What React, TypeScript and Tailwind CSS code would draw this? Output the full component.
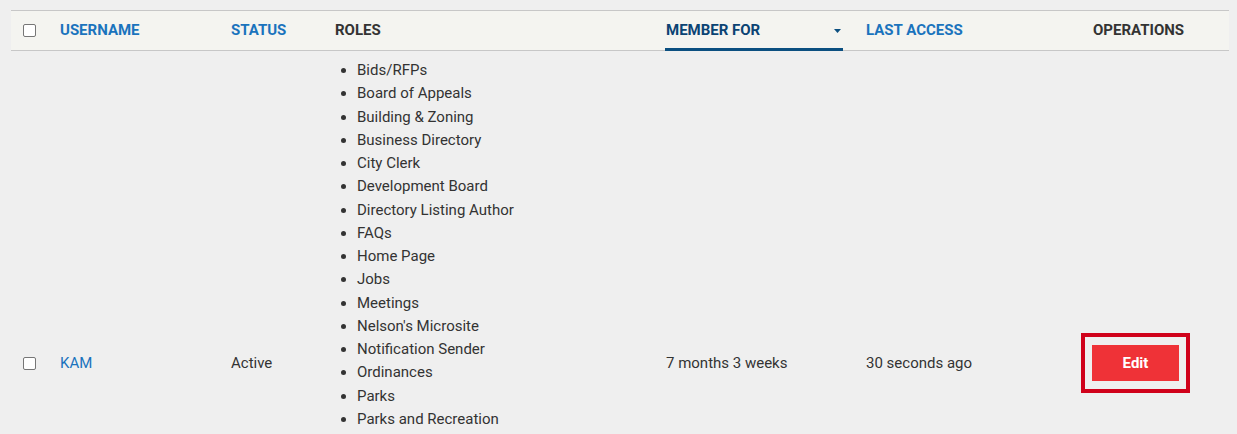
import React from "react";

const roles = [
  "Bids/RFPs",
  "Board of Appeals",
  "Building & Zoning",
  "Business Directory",
  "City Clerk",
  "Development Board",
  "Directory Listing Author",
  "FAQs",
  "Home Page",
  "Jobs",
  "Meetings",
  "Nelson's Microsite",
  "Notification Sender",
  "Ordinances",
  "Parks",
  "Parks and Recreation",
  "Planning Commission",
  "Police Department",
  "Public Works",
  "Recycling",
  "Site Administrator",
  "Staff Directory",
  "Tax Collector",
  "Trash Collection",
  "Utilities",
  "Zoning Board",
];

function Checkbox() {
  return (
    <span className="block w-[13px] h-[13px] rounded-[2px] border border-[#767676] bg-white" />
  );
}

export default function App() {
  return (
    <div
      className="min-h-[434px] bg-[#efefef] pt-[10px] pl-[11px] pr-[8px] text-[#333333]"
      style={{ fontFamily: "Roboto, 'Noto Sans', sans-serif" }}
    >
      <div className="grid grid-cols-[49px_171px_104px_331px_200px_227px_1fr]">
        {/* header */}
        <div className="contents">
          <div className="h-[41px] bg-[#f4f4f0] border-y border-[#c7c7c7] flex items-center pl-[12px]">
            <Checkbox />
          </div>
          <div className="h-[41px] bg-[#f4f4f0] border-y border-[#c7c7c7] flex items-center text-[15px] font-bold text-[#1a73bd]">
            USERNAME
          </div>
          <div className="h-[41px] bg-[#f4f4f0] border-y border-[#c7c7c7] flex items-center text-[15px] font-bold text-[#1a73bd]">
            STATUS
          </div>
          <div className="h-[41px] bg-[#f4f4f0] border-y border-[#c7c7c7] flex items-center text-[15px] font-bold text-[#333333]">
            ROLES
          </div>
          <div className="h-[41px] bg-[#f4f4f0] border-y border-[#c7c7c7] flex items-stretch">
            <div className="w-[178px] -ml-[1px] flex items-center justify-between border-b-[3px] border-[#0b4f80] -mb-[1px] pt-[2px] text-[15px] font-bold text-[#0b4373]">
              <span className="pl-[1px]">MEMBER FOR</span>
              <svg width="7" height="4" viewBox="0 0 7 4" className="mr-[2px]">
                <path d="M0 0H7L3.5 4Z" fill="#0b4f80" />
              </svg>
            </div>
          </div>
          <div className="h-[41px] bg-[#f4f4f0] border-y border-[#c7c7c7] flex items-center text-[15px] font-bold text-[#1a73bd]">
            LAST ACCESS
          </div>
          <div className="h-[41px] bg-[#f4f4f0] border-y border-[#c7c7c7] flex items-center text-[15px] font-bold text-[#333333]">
            OPERATIONS
          </div>
        </div>

        {/* row */}
        <div className="contents">
          <div className="flex items-center pl-[12px]">
            <Checkbox />
          </div>
          <div className="flex items-center text-[15px] text-[#1a73bd]">KAM</div>
          <div className="flex items-center text-[15px]">Active</div>
          <div className="pt-[8px] pb-[12px]">
            <ul className="list-disc pl-[22px] text-[15px] leading-[23.27px] marker:text-[#333333]">
              {roles.map((r) => (
                <li key={r}>{r}</li>
              ))}
            </ul>
          </div>
          <div className="flex items-center text-[15px]">7 months 3 weeks</div>
          <div className="flex items-center text-[15px]">30 seconds ago</div>
          <div className="flex items-center -ml-[12px]">
            <div className="border-4 border-[#d0021b] px-[7px] py-[8px]">
              <button className="w-[87px] h-[36px] bg-[#ef3237] text-white text-[15px] font-bold">
                Edit
              </button>
            </div>
          </div>
        </div>
      </div>
    </div>
  );
}
